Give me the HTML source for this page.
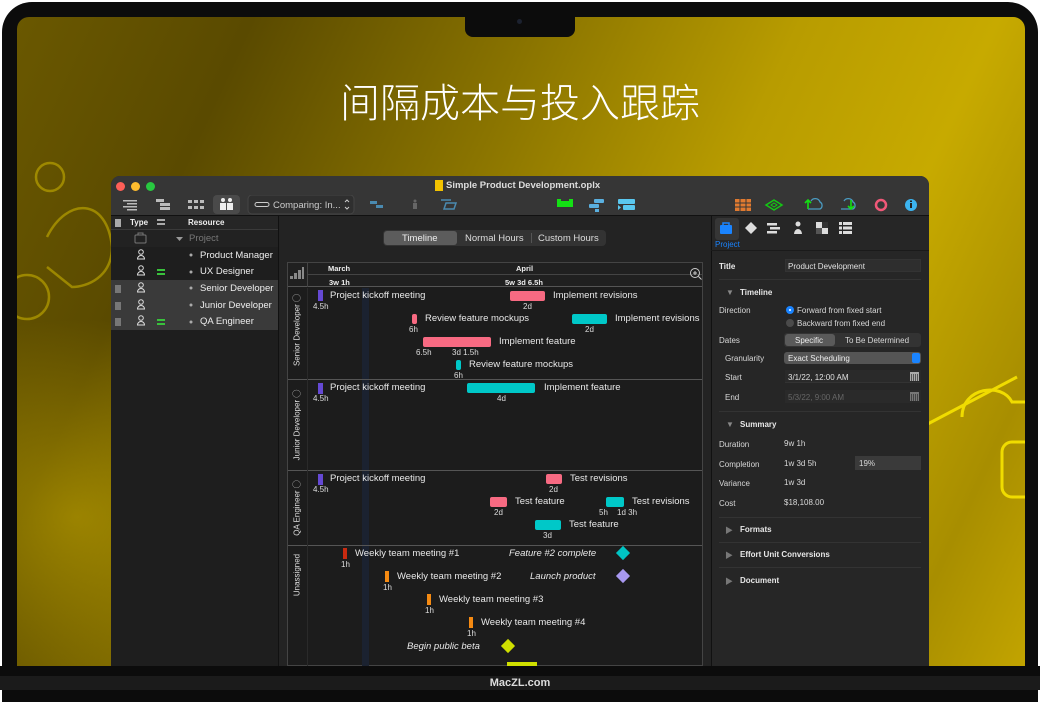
<!DOCTYPE html>
<html><head><meta charset="utf-8"><style>
*{margin:0;padding:0;box-sizing:border-box}
body{width:1040px;height:690px;overflow:hidden;background:#fff;font-family:"Liberation Sans","Noto Sans CJK SC",sans-serif;position:relative}
.a{position:absolute}
.t{position:absolute;color:#e8e8e8;font-size:9.5px;line-height:11px;white-space:nowrap}
.s{position:absolute;color:#ddd;font-size:8px;line-height:9px;white-space:nowrap}
.i{font-style:italic}
.bar{position:absolute;height:10px;border-radius:2px}
.pk{background:#f76a82}.cy{background:#00c8c8}.pu{background:#6549d4}.or{background:#f58a12}
.ins{position:absolute;color:#d8d8d8;font-size:8px;white-space:nowrap}
.insb{position:absolute;color:#e8e8e8;font-size:8px;font-weight:bold;white-space:nowrap}
.lr{position:absolute;left:111px;width:167px;height:17px}
.lt{position:absolute;color:#eee;font-size:9.5px;white-space:nowrap}
</style></head><body>
<div class="a" style="left:2px;top:2px;width:1036px;height:700px;background:#0c0c0c;border-radius:30px 30px 0 0"></div>
<div class="a" style="left:17px;top:17px;width:1008px;height:649px;border-radius:12px 12px 0 0;overflow:hidden;background:linear-gradient(115deg,#6a5800 0%,#5a4a00 18%,#8a7400 40%,#b89c00 60%,#c7aa00 75%,#a88e00 90%,#c2a400 100%)">
 <div class="a" style="left:0;top:300px;width:300px;height:400px;background:radial-gradient(ellipse at 20% 50%,rgba(210,180,0,.5),transparent 70%)"></div>
 <svg class="a" style="left:0;top:120px" width="120" height="200"><g fill="none" stroke="#e6cc00" stroke-width="2.5" opacity=".45"><circle cx="33" cy="40" r="14"/><path d="M30 100 C 50 60, 90 60, 95 110 C 95 140, 70 150, 55 150 L 30 130"/><circle cx="10" cy="160" r="22"/></g></svg>
 <svg class="a" style="left:905px;top:340px" width="103" height="160"><g fill="none" stroke="#f0dc00" stroke-width="3"><path d="M0 70 L95 20"/><path d="M40 60 C40 30,80 25,90 45 L103 45"/><rect x="80" y="85" width="40" height="55" rx="10"/></g></svg>
</div>
<div class="a" style="left:465px;top:15px;width:110px;height:22px;background:#0c0c0c;border-radius:0 0 8px 8px"></div>
<div class="a" style="left:517px;top:19px;width:5px;height:5px;border-radius:50%;background:#1c2230"></div>
<div class="a" style="left:0;top:78px;width:1040px;text-align:center;color:#fff;font-size:40px;line-height:44px;font-family:'Noto Sans CJK SC',sans-serif;font-weight:300">间隔成本与投入跟踪</div>

<div class="a" style="left:111px;top:176px;width:818px;height:490px;background:#232323;border-radius:9px 9px 0 0;overflow:hidden">
 <div class="a" style="left:0;top:0;width:818px;height:40px;background:#363636;border-bottom:1px solid #111"></div>
 <div class="a" style="left:5px;top:6px;width:9px;height:9px;border-radius:50%;background:#fe5f57"></div>
 <div class="a" style="left:20px;top:6px;width:9px;height:9px;border-radius:50%;background:#febc2e"></div>
 <div class="a" style="left:35px;top:6px;width:9px;height:9px;border-radius:50%;background:#28c840"></div>
 <div class="a" style="left:324px;top:4px;width:8px;height:11px;background:#f2c200"></div>
 <div class="a" style="left:335px;top:4px;color:#ddd;font-size:9.5px;font-weight:bold">Simple Product Development.oplx</div>
 <svg class="a" style="left:0;top:19px" width="818" height="20">
  <g fill="#bbb"><rect x="12" y="5" width="14" height="1.5"/><rect x="16" y="8" width="10" height="1.5"/><rect x="12" y="11" width="14" height="1.5"/><rect x="16" y="14" width="10" height="1.5"/></g>
  <g fill="#bbb"><rect x="45" y="4" width="8" height="3"/><rect x="49" y="8" width="10" height="3"/><rect x="49" y="12" width="10" height="3"/></g>
  <g fill="#bbb"><rect x="77" y="5" width="4" height="3"/><rect x="83" y="5" width="4" height="3"/><rect x="89" y="5" width="4" height="3"/><rect x="77" y="11" width="4" height="3"/><rect x="83" y="11" width="4" height="3"/><rect x="89" y="11" width="4" height="3"/></g>
  <rect x="102" y="0" width="27" height="19" rx="4" fill="#4a4a4a"/>
  <g fill="#eee"><circle cx="112" cy="5" r="2"/><rect x="109" y="8" width="6" height="7"/><circle cx="119" cy="5" r="2"/><rect x="116" y="8" width="6" height="7"/></g>
  <rect x="137" y="0" width="106" height="19" rx="4" fill="#2f2f2f" stroke="#444"/>
  <rect x="144" y="7.5" width="14" height="4" rx="2" fill="none" stroke="#ccc"/>
  <text x="162" y="13" fill="#ccc" font-size="9.5" font-family="Liberation Sans">Comparing: In...</text>
  <path d="M234 7l2-2 2 2M234 12l2 2 2-2" stroke="#ccc" fill="none"/>
  <g fill="#4a8ab0"><rect x="259" y="6" width="7" height="3"/><rect x="265" y="10" width="7" height="3"/></g>
  <g fill="#666"><circle cx="304" cy="6" r="1.5"/><rect x="302" y="8" width="4" height="6"/></g>
  <g fill="none" stroke="#4a8ab0" stroke-width="1.5"><path d="M330 5h10M333 14h10l2-6h-10z"/></g>
  <rect x="446" y="6" width="16" height="6" fill="#14e014"/><rect x="446" y="4" width="4" height="3" fill="#14e014"/><rect x="458" y="4" width="4" height="3" fill="#14e014"/>
  <g fill="#5ab0e0"><rect x="483" y="4" width="10" height="4" rx="1"/><rect x="478" y="9" width="10" height="4" rx="1"/><rect x="484" y="14" width="4" height="3"/></g>
  <g fill="#5ac8f0"><rect x="507" y="4" width="17" height="5" rx="1"/><rect x="512" y="10" width="12" height="5" rx="1"/><path d="M507 10l3 2.5-3 2.5z"/></g>
  <g><rect x="624" y="4" width="16" height="12" fill="#e07a30"/><g stroke="#363636" stroke-width="1"><path d="M624 8h16M624 12h16M629 4v12M635 4v12"/></g></g>
  <path d="M655 10l8-5 8 5-8 5z" fill="none" stroke="#14c814" stroke-width="1.5"/><path d="M660 10l3-2 3 2-3 2z" fill="none" stroke="#14c814"/>
  <path d="M697 14h12a4 4 0 0 0 0-7 5 5 0 0 0-9-1" fill="none" stroke="#4a9ac0" stroke-width="1.3"/><path d="M697 14V5M694 8l3-3 3 3" stroke="#14e014" stroke-width="1.6" fill="none"/>
  <path d="M730 14h12a4 4 0 0 0 0-7 5 5 0 0 0-9-1" fill="none" stroke="#4a9ac0" stroke-width="1.3"/><path d="M740 5v9M737 11l3 3 3-3" stroke="#14e014" stroke-width="1.6" fill="none"/>
  <circle cx="770" cy="10" r="5" fill="none" stroke="#f05878" stroke-width="2.5"/>
  <circle cx="800" cy="10" r="6" fill="#3cb4f0"/><rect x="799" y="8" width="2" height="5" fill="#222"/><rect x="799" y="5.5" width="2" height="1.5" fill="#222"/>
 </svg>
</div>

<div class="a" style="left:111px;top:216px;width:167px;height:450px;background:#1e1e1e"></div>
<div class="a" style="left:111px;top:216px;width:167px;height:14px;background:#262626;border-bottom:1px solid #3a3a3a"></div>
<div class="a" style="left:115px;top:219px;width:6px;height:8px;background:#aaa"></div>
<div class="a" style="left:130px;top:218px;color:#eee;font-size:8px;font-weight:bold">Type</div>
<div class="a" style="left:157px;top:219px;width:8px;height:2px;background:#aaa;box-shadow:0 4px 0 #aaa"></div>
<div class="a" style="left:188px;top:218px;color:#eee;font-size:8px;font-weight:bold">Resource</div>
<div class="lr" style="top:230px;background:#222"></div>
<div class="lr" style="top:280px;background:#3a3a3a"></div>
<div class="lr" style="top:297px;background:#3a3a3a"></div>
<div class="lr" style="top:313px;background:#3a3a3a"></div>
<svg class="a" style="left:111px;top:230px" width="167" height="100">
 <rect x="24" y="5" width="11" height="8" rx="1" fill="none" stroke="#777"/><path d="M27 5V3h5v2" fill="none" stroke="#777"/>
 <path d="M65 7l3.5 4 3.5-4z" fill="#999"/>
 <g fill="none" stroke="#ddd"><circle cx="30" cy="22" r="2.3"/><path d="M26.5 29a3.5 3.5 0 0 1 7 0z"/><circle cx="30" cy="38" r="2.3"/><path d="M26.5 45a3.5 3.5 0 0 1 7 0z"/><circle cx="30" cy="55" r="2.3"/><path d="M26.5 62a3.5 3.5 0 0 1 7 0z"/><circle cx="30" cy="72" r="2.3"/><path d="M26.5 79a3.5 3.5 0 0 1 7 0z"/><circle cx="30" cy="88" r="2.3"/><path d="M26.5 95a3.5 3.5 0 0 1 7 0z"/></g>
 <g fill="#39c13c"><rect x="46" y="39" width="8" height="2"/><rect x="46" y="43" width="8" height="2"/><rect x="46" y="89" width="8" height="2"/><rect x="46" y="93" width="8" height="2"/></g>
 <g fill="#777"><rect x="4" y="55" width="6" height="8"/><rect x="4" y="72" width="6" height="8"/><rect x="4" y="88" width="6" height="8"/></g>
 <g fill="#aaa"><circle cx="80" cy="25" r="1.5"/><circle cx="80" cy="42" r="1.5"/><circle cx="80" cy="58" r="1.5"/><circle cx="80" cy="75" r="1.5"/><circle cx="80" cy="92" r="1.5"/></g>
</svg>
<div class="lt" style="left:189px;top:233px;color:#777">Project</div>
<div class="lt" style="left:200px;top:250px">Product Manager</div>
<div class="lt" style="left:200px;top:266px">UX Designer</div>
<div class="lt" style="left:200px;top:283px">Senior Developer</div>
<div class="lt" style="left:200px;top:300px">Junior Developer</div>
<div class="lt" style="left:200px;top:316px">QA Engineer</div>
<div class="a" style="left:278px;top:216px;width:1px;height:450px;background:#111"></div>

<div class="a" style="left:383px;top:230px;width:223px;height:16px;background:#333;border-radius:4px"></div>
<div class="a" style="left:384px;top:231px;width:73px;height:14px;background:#5c5c5c;border-radius:3px"></div>
<div class="a" style="left:402px;top:233px;color:#eee;font-size:9.5px">Timeline</div>
<div class="a" style="left:465px;top:233px;color:#ddd;font-size:9.5px">Normal Hours</div>
<div class="a" style="left:531px;top:233px;width:1px;height:10px;background:#555"></div>
<div class="a" style="left:538px;top:233px;color:#ddd;font-size:9.5px">Custom Hours</div>

<div class="a" style="left:287px;top:262px;width:416px;height:404px;background:#1c1c1c;border:1px solid #444"></div>
<div class="a" style="left:288px;top:263px;width:414px;height:24px;background:#202020;border-bottom:1px solid #555"></div>
<div class="a" style="left:307px;top:263px;width:1px;height:24px;background:#444"></div>
<div class="a" style="left:308px;top:274px;width:394px;height:1px;background:#444"></div>
<svg class="a" style="left:289px;top:266px" width="16" height="16"><g fill="#888"><rect x="1" y="10" width="3" height="3"/><rect x="5" y="7" width="3" height="6"/><rect x="9" y="4" width="3" height="9"/><rect x="13" y="1" width="2" height="12"/></g></svg>
<div class="a" style="left:328px;top:264px;color:#eee;font-size:7.5px;font-weight:bold">March</div>
<div class="a" style="left:516px;top:264px;color:#eee;font-size:7.5px;font-weight:bold">April</div>
<div class="a" style="left:329px;top:278px;color:#eee;font-size:7.5px;font-weight:bold">3w 1h</div>
<div class="a" style="left:505px;top:278px;color:#eee;font-size:7.5px;font-weight:bold">5w 3d 6.5h</div>
<svg class="a" style="left:689px;top:267px" width="14" height="14"><circle cx="6" cy="6" r="4.5" fill="none" stroke="#ccc"/><path d="M4 6h4M6 4v4M9.5 9.5l3 3" stroke="#ccc"/></svg>
<div class="a" style="left:362px;top:288px;width:7px;height:378px;background:#1b2230"></div>
<div class="a" style="left:288px;top:379px;width:414px;height:1px;background:#555"></div>
<div class="a" style="left:288px;top:470px;width:414px;height:1px;background:#555"></div>
<div class="a" style="left:288px;top:545px;width:414px;height:1px;background:#555"></div>
<div class="a" style="left:307px;top:288px;width:1px;height:378px;background:#2a2a2a"></div>
<div class="a" style="left:297px;top:330px;transform:translate(-50%,-50%) rotate(-90deg);color:#ddd;font-size:8px;white-space:nowrap">Senior Developer &#9711;</div>
<div class="a" style="left:297px;top:425px;transform:translate(-50%,-50%) rotate(-90deg);color:#ddd;font-size:8px;white-space:nowrap">Junior Developer &#9711;</div>
<div class="a" style="left:297px;top:508px;transform:translate(-50%,-50%) rotate(-90deg);color:#ddd;font-size:8px;white-space:nowrap">QA Engineer &#9711;</div>
<div class="a" style="left:297px;top:575px;transform:translate(-50%,-50%) rotate(-90deg);color:#ddd;font-size:8px;white-space:nowrap">Unassigned</div>

<div class="bar pu" style="left:318px;top:290px;width:5px;height:11px;border-radius:0"></div><div class="t" style="left:330px;top:290px">Project kickoff meeting</div><div class="s" style="left:313px;top:302px">4.5h</div>
<div class="bar pk" style="left:510px;top:291px;width:35px"></div><div class="t" style="left:553px;top:290px">Implement revisions</div><div class="s" style="left:523px;top:302px">2d</div>
<div class="bar pk" style="left:412px;top:314px;width:5px"></div><div class="t" style="left:425px;top:313px">Review feature mockups</div><div class="s" style="left:409px;top:325px">6h</div>
<div class="bar cy" style="left:572px;top:314px;width:35px"></div><div class="t" style="left:615px;top:313px">Implement revisions</div><div class="s" style="left:585px;top:325px">2d</div>
<div class="bar pk" style="left:423px;top:337px;width:68px"></div><div class="t" style="left:499px;top:336px">Implement feature</div><div class="s" style="left:416px;top:348px">6.5h</div><div class="s" style="left:452px;top:348px">3d 1.5h</div>
<div class="bar cy" style="left:456px;top:360px;width:5px"></div><div class="t" style="left:469px;top:359px">Review feature mockups</div><div class="s" style="left:454px;top:371px">6h</div>
<div class="bar pu" style="left:318px;top:383px;width:5px;height:11px;border-radius:0"></div><div class="t" style="left:330px;top:382px">Project kickoff meeting</div><div class="s" style="left:313px;top:394px">4.5h</div>
<div class="bar cy" style="left:467px;top:383px;width:68px"></div><div class="t" style="left:544px;top:382px">Implement feature</div><div class="s" style="left:497px;top:394px">4d</div>
<div class="bar pu" style="left:318px;top:474px;width:5px;height:11px;border-radius:0"></div><div class="t" style="left:330px;top:473px">Project kickoff meeting</div><div class="s" style="left:313px;top:485px">4.5h</div>
<div class="bar pk" style="left:546px;top:474px;width:16px"></div><div class="t" style="left:570px;top:473px">Test revisions</div><div class="s" style="left:549px;top:485px">2d</div>
<div class="bar pk" style="left:490px;top:497px;width:17px"></div><div class="t" style="left:515px;top:496px">Test feature</div><div class="s" style="left:494px;top:508px">2d</div>
<div class="bar cy" style="left:606px;top:497px;width:18px"></div><div class="t" style="left:632px;top:496px">Test revisions</div><div class="s" style="left:599px;top:508px">5h</div><div class="s" style="left:617px;top:508px">1d 3h</div>
<div class="bar cy" style="left:535px;top:520px;width:26px"></div><div class="t" style="left:569px;top:519px">Test feature</div><div class="s" style="left:543px;top:531px">3d</div>
<div class="bar" style="left:343px;top:548px;width:4px;height:11px;background:#c82a10;border-radius:0"></div><div class="t" style="left:355px;top:548px">Weekly team meeting #1</div><div class="s" style="left:341px;top:560px">1h</div>
<div class="bar or" style="left:385px;top:571px;width:4px;height:11px;border-radius:0"></div><div class="t" style="left:397px;top:571px">Weekly team meeting #2</div><div class="s" style="left:383px;top:583px">1h</div>
<div class="bar or" style="left:427px;top:594px;width:4px;height:11px;border-radius:0"></div><div class="t" style="left:439px;top:594px">Weekly team meeting #3</div><div class="s" style="left:425px;top:606px">1h</div>
<div class="bar or" style="left:469px;top:617px;width:4px;height:11px;border-radius:0"></div><div class="t" style="left:481px;top:617px">Weekly team meeting #4</div><div class="s" style="left:467px;top:629px">1h</div>
<div class="t i" style="left:509px;top:548px">Feature #2 complete</div>
<div class="a" style="left:618px;top:548px;width:10px;height:10px;background:#00c4c4;transform:rotate(45deg)"></div>
<div class="t i" style="left:530px;top:571px">Launch product</div>
<div class="a" style="left:618px;top:571px;width:10px;height:10px;background:#a898f0;transform:rotate(45deg)"></div>
<div class="t i" style="left:407px;top:641px">Begin public beta</div>
<div class="a" style="left:503px;top:641px;width:10px;height:10px;background:#d0e000;transform:rotate(45deg)"></div>
<div class="a" style="left:507px;top:662px;width:30px;height:4px;background:#d0e000"></div>

<div class="a" style="left:703px;top:216px;width:8px;height:450px;background:#232323"></div>
<div class="a" style="left:711px;top:216px;width:218px;height:450px;background:#262626;border-left:1px solid #111"></div>
<div class="a" style="left:715px;top:218px;width:24px;height:22px;background:#363636;border-radius:3px"></div>
<svg class="a" style="left:711px;top:218px" width="150" height="22">
 <rect x="9" y="7" width="12" height="9" rx="1" fill="#1a84ff"/><path d="M12 7V5h6v2" fill="none" stroke="#1a84ff" stroke-width="1.5"/>
 <path d="M40 4l6 6-6 6-6-6z" fill="#ddd"/>
 <g fill="#ddd"><rect x="56" y="5" width="10" height="2.5"/><rect x="59" y="9" width="10" height="2.5"/><rect x="56" y="13" width="10" height="2.5"/></g>
 <circle cx="87" cy="6" r="2.5" fill="#ddd"/><path d="M83 16a4 5 0 0 1 8 0z" fill="#ddd"/>
 <rect x="105" y="4" width="12" height="12" fill="#ddd"/><rect x="111" y="4" width="6" height="6" fill="#333"/><rect x="105" y="10" width="6" height="6" fill="#555"/>
 <g fill="#ddd"><rect x="128" y="4" width="13" height="3"/><rect x="128" y="8.5" width="13" height="3"/><rect x="128" y="13" width="13" height="3"/></g><g fill="#262626"><rect x="131" y="4" width="1" height="12"/></g>
</svg>
<div class="a" style="left:715px;top:240px;color:#1a84ff;font-size:8px">Project</div>
<div class="a" style="left:711px;top:250px;width:218px;height:1px;background:#1a1a1a"></div>
<div class="insb" style="left:719px;top:262px">Title</div>
<div class="a" style="left:785px;top:259px;width:136px;height:13px;background:#2e2e2e;border:1px solid #333"></div>
<div class="ins" style="left:788px;top:262px;color:#e0e0e0">Product Development</div>
<div class="a" style="left:719px;top:279px;width:202px;height:1px;background:#333"></div>
<div class="ins" style="left:726px;top:288px;color:#888">&#9660;</div><div class="insb" style="left:740px;top:288px">Timeline</div>
<div class="ins" style="left:719px;top:306px">Direction</div>
<div class="a" style="left:786px;top:306px;width:8px;height:8px;border-radius:50%;background:#1a84ff"></div><div class="a" style="left:789px;top:309px;width:2px;height:2px;border-radius:50%;background:#fff"></div>
<div class="ins" style="left:797px;top:306px">Forward from fixed start</div>
<div class="a" style="left:786px;top:319px;width:8px;height:8px;border-radius:50%;background:#4a4a4a"></div>
<div class="ins" style="left:797px;top:319px">Backward from fixed end</div>
<div class="ins" style="left:719px;top:336px">Dates</div>
<div class="a" style="left:784px;top:333px;width:137px;height:14px;background:#333;border-radius:3px"></div>
<div class="a" style="left:785px;top:334px;width:50px;height:12px;background:#5a5a5a;border-radius:3px"></div>
<div class="ins" style="left:795px;top:336px;color:#eee">Specific</div>
<div class="ins" style="left:845px;top:336px">To Be Determined</div>
<div class="ins" style="left:725px;top:354px">Granularity</div>
<div class="a" style="left:784px;top:352px;width:137px;height:12px;background:#555;border-radius:3px"></div>
<div class="ins" style="left:788px;top:354px;color:#eee">Exact Scheduling</div>
<div class="a" style="left:912px;top:353px;width:8px;height:10px;background:#1a84ff;border-radius:2px"></div>
<div class="ins" style="left:725px;top:373px">Start</div>
<div class="a" style="left:785px;top:370px;width:136px;height:13px;background:#2a2a2a;border-bottom:1px solid #333"></div>
<div class="ins" style="left:788px;top:373px;color:#e0e0e0">3/1/22, 12:00 AM</div>
<div class="a" style="left:910px;top:372px;width:9px;height:9px;background:repeating-linear-gradient(90deg,#aaa 0 1px,#555 1px 2px);border-top:2px solid #aaa"></div>
<div class="ins" style="left:725px;top:393px">End</div>
<div class="a" style="left:785px;top:390px;width:136px;height:13px;background:#2a2a2a"></div>
<div class="ins" style="left:788px;top:393px;color:#666">5/3/22, 9:00 AM</div>
<div class="a" style="left:910px;top:392px;width:9px;height:9px;background:repeating-linear-gradient(90deg,#777 0 1px,#444 1px 2px);border-top:2px solid #777"></div>
<div class="a" style="left:719px;top:411px;width:202px;height:1px;background:#333"></div>
<div class="ins" style="left:726px;top:420px;color:#888">&#9660;</div><div class="insb" style="left:740px;top:420px">Summary</div>
<div class="ins" style="left:719px;top:440px">Duration</div><div class="ins" style="left:784px;top:439px">9w 1h</div>
<div class="ins" style="left:719px;top:460px">Completion</div><div class="ins" style="left:784px;top:459px">1w 3d 5h</div>
<div class="a" style="left:855px;top:456px;width:66px;height:14px;background:#3a3a3a"></div><div class="ins" style="left:859px;top:459px">19%</div>
<div class="ins" style="left:719px;top:479px">Variance</div><div class="ins" style="left:784px;top:478px">1w 3d</div>
<div class="ins" style="left:719px;top:499px">Cost</div><div class="ins" style="left:784px;top:498px">$18,108.00</div>
<div class="a" style="left:719px;top:517px;width:202px;height:1px;background:#333"></div>
<div class="ins" style="left:725px;top:525px;color:#777">&#9654;</div><div class="insb" style="left:740px;top:525px">Formats</div>
<div class="a" style="left:719px;top:542px;width:202px;height:1px;background:#333"></div>
<div class="ins" style="left:725px;top:550px;color:#777">&#9654;</div><div class="insb" style="left:740px;top:550px">Effort Unit Conversions</div>
<div class="a" style="left:719px;top:567px;width:202px;height:1px;background:#333"></div>
<div class="ins" style="left:725px;top:576px;color:#777">&#9654;</div><div class="insb" style="left:740px;top:576px">Document</div>

<div class="a" style="left:0;top:666px;width:1040px;height:24px;background:#0c0c0c"></div>
<div class="a" style="left:0;top:676px;width:1040px;height:14px;background:#1b1b1b"></div>
<div class="a" style="left:0;top:676px;width:1040px;text-align:center;color:#ddd;font-size:11px;font-weight:bold;line-height:14px">MacZL.com</div>
</body></html>
